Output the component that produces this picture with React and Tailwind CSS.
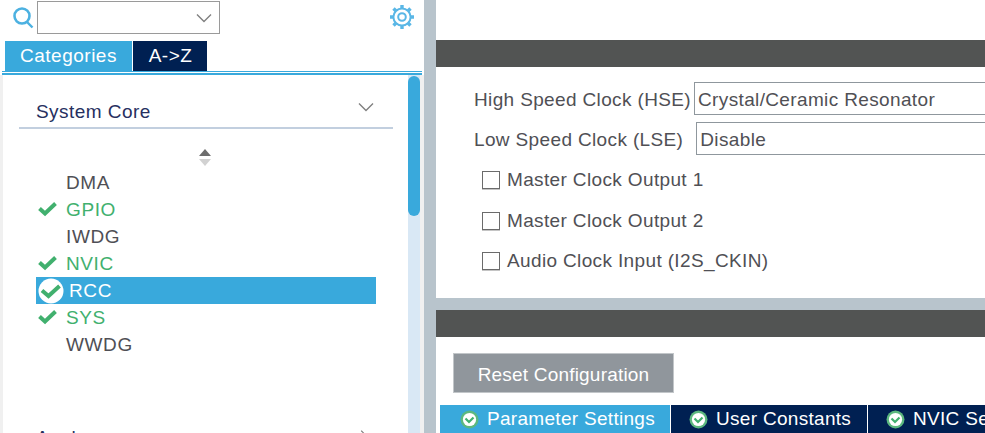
import { ChevronRight } from 'lucide-react';

const ITEMS = [
  { name: 'DMA' },
  { name: 'GPIO', ok: true },
  { name: 'IWDG' },
  { name: 'NVIC', ok: true },
  { name: 'RCC', ok: true, selected: true },
  { name: 'SYS', ok: true },
  { name: 'WWDG' },
];

const CLOCKS = [
  { label: 'High Speed Clock (HSE)', value: 'Crystal/Ceramic Resonator', gap: 'ml-[3px]' },
  { label: 'Low Speed Clock (LSE)', value: 'Disable', gap: 'ml-[13px]' },
];

const OPTIONS = ['Master Clock Output 1', 'Master Clock Output 2', 'Audio Clock Input (I2S_CKIN)'];

const TABS = [
  { label: 'Parameter Settings', width: 'w-[230px] pl-[20px]', bg: 'bg-[#39a9dc]' },
  { label: 'User Constants', width: 'w-[196px] pl-[18px]', bg: 'bg-[#002052]' },
  { label: 'NVIC Settings', width: 'w-[196px] pl-[18px]', bg: 'bg-[#002052]' },
];

function Tick() {
  return (
    <svg width="19" height="16" viewBox="0 0 19 16" className="mb-[2px]">
      <path d="M1.5 7.5 L7 12.5 L17.5 2.5" fill="none" stroke="#41b06e" strokeWidth="4" />
    </svg>
  );
}

function RoundTick() {
  return (
    <svg width="26" height="26" viewBox="0 0 26 26">
      <circle cx="13" cy="13" r="12.5" fill="#ffffff" />
      <path d="M4 12.5 L10.5 18 L21.5 8" fill="none" stroke="#41b06e" strokeWidth="4" />
    </svg>
  );
}

function TabTick() {
  return (
    <svg width="19" height="19" viewBox="0 0 19 19">
      <circle cx="9.5" cy="9.5" r="9" fill="#5cb87f" />
      <circle cx="9.5" cy="9.5" r="6.6" fill="#ffffff" />
      <path d="M5.5 8.5 L9 12 L13.5 7.5" fill="none" stroke="#41b06e" strokeWidth="2.2" />
    </svg>
  );
}

function SearchIcon() {
  return (
    <svg width="22" height="24" viewBox="0 0 22 24" fill="none" stroke="#4cb1e1">
      <circle cx="10" cy="10" r="7.5" strokeWidth="2.6" />
      <path d="M15 16 L20.5 21.5" strokeWidth="2.4" />
    </svg>
  );
}

function GearIcon() {
  return (
    <svg width="26" height="26" viewBox="0 0 26 26" fill="none" stroke="#5ab7e6">
      <circle cx="13" cy="13" r="8.6" strokeWidth="2" />
      <circle cx="13" cy="13" r="3.8" strokeWidth="2" />
      <path
        d="M13 1v4M13 21v4M1 13h4M21 13h4M4.5 4.5l2.8 2.8M18.7 18.7l2.8 2.8M4.5 21.5l2.8-2.8M18.7 7.3l2.8-2.8"
        strokeWidth="3.4"
      />
    </svg>
  );
}

function SortIcon() {
  return (
    <svg width="14" height="17" viewBox="0 0 14 17" className="block">
      <path d="M7 0 L13 7 H1 Z" fill="#6d6d6d" />
      <path d="M7 17 L13 10 H1 Z" fill="#d2d2d2" />
    </svg>
  );
}

function Chevron() {
  return (
    <svg width="16" height="10" viewBox="0 0 16 10" fill="none" stroke="#808080" strokeWidth="1.4" className="block">
      <path d="M1 1.5 L8 8.5 L15 1.5" />
    </svg>
  );
}

function SidePanel() {
  return (
    <div className="flex h-full w-[424px] flex-none flex-col bg-white">
      <div className="flex h-[41px] flex-none items-start pt-px">
        <div className="ml-[12px] mt-[5px] w-[25px] flex-none">
          <SearchIcon />
        </div>
        <div className="flex h-[33px] w-[183px] flex-none items-center justify-end border border-[#9a9a9a] pr-[7px]">
          <Chevron />
        </div>
        <div className="ml-[169px] mt-[3px] flex-none">
          <GearIcon />
        </div>
      </div>

      <div className="flex h-[30px] flex-none pl-[5px] text-[19px] tracking-[0.5px] text-white">
        <div className="flex w-[127px] items-center justify-center bg-[#39a9dc]">Categories</div>
        <div className="ml-px flex w-[74px] items-center justify-center pl-px bg-[#002052]">A-&gt;Z</div>
      </div>
      <div className="ml-[2px] mr-[2px] h-[1px] flex-none bg-[#39a9dc]" />
      <div className="h-[1px] flex-none" />
      <div className="ml-[2px] mr-[2px] h-[2px] flex-none bg-[#39a9dc]" />

      <div className="flex min-h-0 flex-1">
        <div className="w-[3px] flex-none bg-[#f0f0f0]" />
        <div className="min-w-0 flex-1 overflow-hidden">
          <div className="ml-[16px] mr-[15px] mt-[21px] flex h-[33px] items-start justify-between border-b-2 border-[#c2cfdf] pl-[17px] pr-[19px] text-[19px] leading-[31px] tracking-[0.45px] text-[#27305f]">
            <span>System Core</span>
            <span className="mt-[6px]">
              <Chevron />
            </span>
          </div>
          <div className="ml-[195px] mt-[20px]">
            <SortIcon />
          </div>
          <div className="mt-[3px] pl-[33px]">
            {ITEMS.map(item => (
              <div
                key={item.name}
                className={`flex h-[27px] w-[340px] items-center text-[19px] tracking-[0.6px] ${
                  item.selected ? 'bg-[#39a9dc] text-white' : item.ok ? 'text-[#41b06e]' : 'text-[#4f4f55]'
                }`}
              >
                <div className="flex w-[30px] flex-none items-center pl-[2px]">
                  {item.selected ? <RoundTick /> : item.ok ? <Tick /> : null}
                </div>
                <span className={item.selected ? 'ml-[3px] pt-[2px]' : 'pt-[2px]'}>{item.name}</span>
              </div>
            ))}
          </div>
          <div className="ml-[33px] mr-[34px] mt-[67px] flex items-start justify-between text-[19px] leading-[26px] tracking-[0.6px] text-[#27305f]">
            <span>Analog</span>
            <ChevronRight size={20} strokeWidth={1.3} className="mt-[1px] text-[#808080]" />
          </div>
        </div>
        <div className="w-[12px] flex-none bg-[#d9e8f5]">
          <div className="mt-px h-[140px] rounded-[6px] bg-[#39a9dc]" />
        </div>
        <div className="w-[4px] flex-none bg-[#f0f0f0]" />
      </div>
    </div>
  );
}

function ModePanel() {
  return (
    <div className="flex h-[298px] flex-none flex-col overflow-hidden bg-white">
      <div className="h-[40px] flex-none" />
      <div className="h-[27px] flex-none bg-[#525453]" />
      <div className="pl-[38px] pt-[15px] text-[19px] tracking-[0.36px] text-[#505055]">
        {CLOCKS.map(c => (
          <div key={c.label} className="mb-[7px] flex h-[33px] items-center whitespace-nowrap">
            <span className="pt-[4px]">{c.label}</span>
            <div className={`${c.gap} flex h-[33px] w-[400px] flex-none items-center border border-[#8f979d] pl-[3px] pt-[4px]`}>
              {c.value}
            </div>
          </div>
        ))}
        <div className="ml-[8px] mt-[-2px]">
          {OPTIONS.map(label => (
            <div key={label} className="flex h-[40.5px] items-center">
              <span className="h-[18px] w-[18px] flex-none border border-[#6b6b6b] bg-white shadow-[0_1px_0_#c4c4c4]" />
              <span className="ml-[7px] whitespace-nowrap">{label}</span>
            </div>
          ))}
        </div>
      </div>
    </div>
  );
}

function ConfigPanel() {
  return (
    <div className="flex min-h-0 flex-1 flex-col overflow-hidden bg-white">
      <div className="h-[27px] flex-none bg-[#525453]" />
      <div className="ml-[17px] mt-[16px] flex h-[40px] w-[221px] flex-none items-center justify-center border border-[#c2c6c9] bg-[#90969c] pt-[4px] text-[19px] tracking-[0.2px] text-white">
        Reset Configuration
      </div>
      <div className="ml-[4px] mt-[12px] flex h-[28px] flex-none text-[19px] tracking-[0.3px] text-white">
        {TABS.map(tab => (
          <div
            key={tab.label}
            className={`${tab.width} ${tab.bg} mr-px flex flex-none items-center gap-[8px] overflow-hidden whitespace-nowrap`}
          >
            <span className="flex-none">
              <TabTick />
            </span>
            <span>{tab.label}</span>
          </div>
        ))}
      </div>
    </div>
  );
}

export default function App() {
  return (
    <div className="flex h-[433px] w-[985px] overflow-hidden bg-[#b8c4cc] font-['Liberation_Sans',Arial,sans-serif]">
      <SidePanel />
      <div className="ml-[12px] flex min-w-0 flex-1 flex-col gap-[12px]">
        <ModePanel />
        <ConfigPanel />
      </div>
    </div>
  );
}
